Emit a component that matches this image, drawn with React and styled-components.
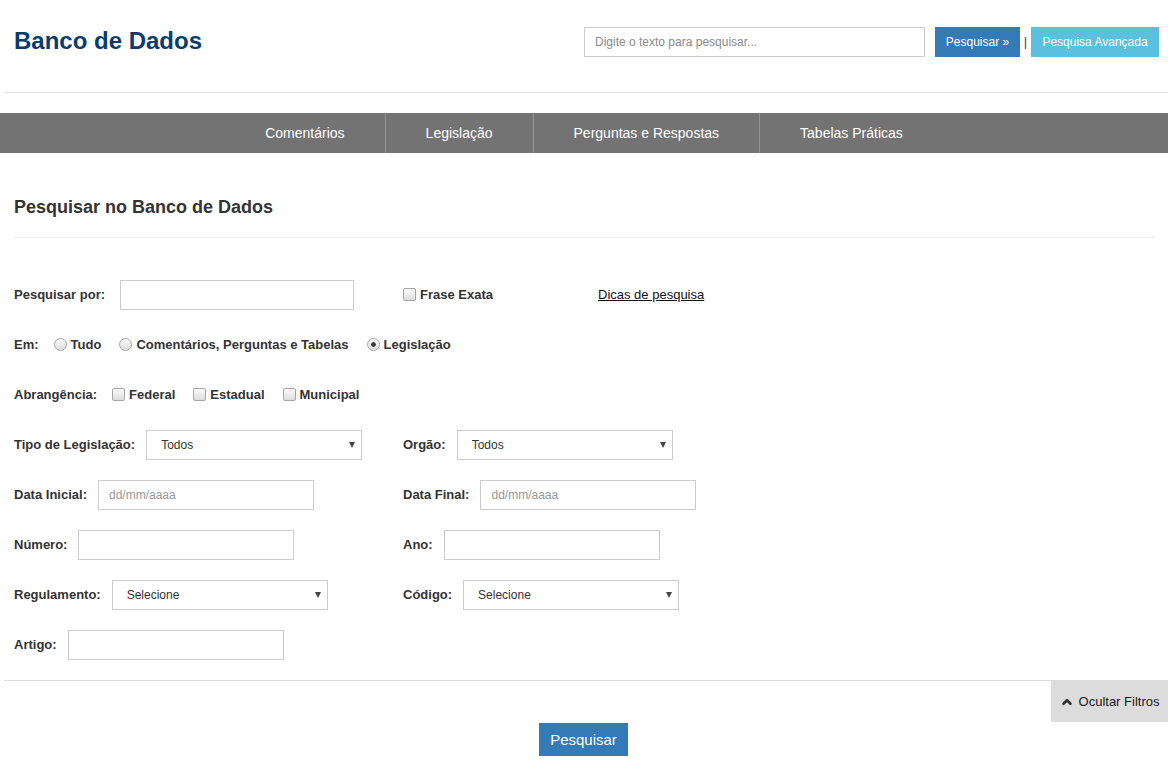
import React from "react";
import styled, { createGlobalStyle } from "styled-components";
import { ChevronUp } from "lucide-react";

const GlobalStyle = createGlobalStyle`
  body {
    margin: 0;
    background: #fff;
    font-family: "Liberation Sans", Arial, Helvetica, sans-serif;
    color: #333;
  }
  * {
    box-sizing: border-box;
  }
`;

const Header = styled.header`
  display: flex;
  align-items: center;
  justify-content: space-between;
  height: 82px;
  padding: 0 9px 0 14px;
`;

const Brand = styled.h1`
  margin: 0;
  font-size: 24px;
  font-weight: bold;
  color: #0a3c6e;
`;

const SearchBar = styled.form`
  display: flex;
  align-items: center;
  margin-top: 1px;
`;

const SearchInput = styled.input`
  width: 341px;
  height: 30px;
  border: 1px solid #ccc;
  padding: 0 10px;
  font-family: inherit;
  font-size: 12px;
  color: #333;

  &::placeholder {
    color: #8a8a8a;
  }
`;

const TopButton = styled.button`
  width: ${(p) => p.$width}px;
  height: 30px;
  border: none;
  padding: 0;
  background: ${(p) => p.$bg};
  color: #fff;
  font-family: inherit;
  font-size: 12px;
  cursor: pointer;
`;

const Pipe = styled.span`
  width: 11px;
  text-align: center;
  color: #4a3a5a;
  font-size: 13px;
`;

const Rule = styled.div`
  margin: ${(p) => p.$margin || "0"};
  border-top: 1px solid ${(p) => p.$color || "#e6e6e6"};
`;

const NavBar = styled.nav`
  display: flex;
  justify-content: center;
  height: 40px;
  background: #737373;
`;

const NavItem = styled.a`
  padding: 0 40px;
  line-height: 40px;
  color: #fff;
  font-size: 14px;
  text-decoration: none;

  & + & {
    border-left: 1px solid #939393;
  }
`;

const Section = styled.section`
  padding: 0 13px 0 14px;
`;

const Title = styled.h2`
  margin: 44px 0 20px;
  font-size: 18px;
  line-height: 20px;
  font-weight: bold;
  color: #333;
`;

const Form = styled.div`
  padding-top: 42px;
`;

const Row = styled.div`
  display: grid;
  grid-template-columns: 389px 1fr;
  align-items: center;
  height: 30px;
  margin-bottom: 20px;
`;

const Field = styled.div`
  display: flex;
  align-items: center;
  grid-column: ${(p) => (p.$full ? "1 / -1" : "auto")};
`;

const Label = styled.label`
  margin-right: ${(p) => p.$gap ?? 11}px;
  margin-top: -1px;
  font-size: 13px;
  font-weight: bold;
  color: #333;
  white-space: nowrap;
`;

const TextInput = styled.input`
  width: ${(p) => p.$width || 216}px;
  height: 30px;
  border: 1px solid #ccc;
  padding: 0 10px;
  font-family: inherit;
  font-size: 12px;
  color: #333;

  &::placeholder {
    color: #999;
  }
`;

const SelectBox = styled.div`
  position: relative;
  width: 216px;
  height: 30px;
`;

const Select = styled.select`
  appearance: none;
  width: 100%;
  height: 100%;
  border: 1px solid #ccc;
  border-radius: 0;
  background: #fff;
  padding: 0 24px 0 14px;
  font-family: inherit;
  font-size: 12px;
  color: #333;
`;

const Caret = styled.span`
  position: absolute;
  right: 7px;
  top: 50%;
  transform: translateY(-50%);
  width: 0;
  height: 0;
  border-left: 3.5px solid transparent;
  border-right: 3.5px solid transparent;
  border-top: 6px solid #444;
  pointer-events: none;
`;

const Option = styled.label`
  display: flex;
  align-items: center;
  margin-right: ${(p) => p.$gap ?? 18}px;
  margin-top: -1px;
  width: ${(p) => (p.$width ? `${p.$width}px` : "auto")};
  font-size: 13px;
  font-weight: bold;
  color: #333;
  white-space: nowrap;
`;

const Check = styled.input`
  appearance: none;
  flex: none;
  width: 13px;
  height: 13px;
  margin: 0 4px 1px 0;
  border: 1px solid #a6a6a6;
  border-radius: ${(p) => (p.type === "radio" ? "50%" : "2px")};
  background: linear-gradient(#fcfcfc, #dcdcdc);

  &:checked {
    background: radial-gradient(circle, #3c3c3c 0 2px, transparent 2.6px),
      linear-gradient(#fcfcfc, #dcdcdc);
  }
`;

const TipLink = styled.a`
  margin-top: -1px;
  font-size: 13px;
  color: #111;
  text-decoration: underline;
`;

const Footer = styled.div`
  display: flex;
  flex-direction: column;
  margin-left: 4px;
  border-top: 1px solid #dcdcdc;
`;

const ToggleButton = styled.button`
  align-self: flex-end;
  display: flex;
  align-items: center;
  justify-content: center;
  gap: 5px;
  width: 117px;
  height: 41px;
  padding: 0;
  border: none;
  background: #dcdcdc;
  color: #1a1a1a;
  font-family: inherit;
  font-size: 13px;
`;

const SubmitButton = styled.button`
  align-self: center;
  margin: 1px 0 0 -5px;
  width: 89px;
  height: 33px;
  padding: 0;
  border: none;
  background: #337ab7;
  color: #fff;
  font-family: inherit;
  font-size: 15px;
`;

const Dropdown = ({ value }) => (
  <SelectBox>
    <Select defaultValue={value}>
      <option>{value}</option>
    </Select>
    <Caret />
  </SelectBox>
);

const navItems = ["Comentários", "Legislação", "Perguntas e Respostas", "Tabelas Práticas"];

export default function App() {
  return (
    <>
      <GlobalStyle />
      <Header>
        <Brand>Banco de Dados</Brand>
        <SearchBar onSubmit={(e) => e.preventDefault()}>
          <SearchInput placeholder="Digite o texto para pesquisar..." />
          <TopButton $bg="#337ab7" $width={85} style={{ marginLeft: 10 }}>
            Pesquisar »
          </TopButton>
          <Pipe>|</Pipe>
          <TopButton $bg="#5bc0de" $width={128}>
            Pesquisa Avançada
          </TopButton>
        </SearchBar>
      </Header>
      <Rule $margin="10px 0 20px 4px" />

      <NavBar>
        {navItems.map((item) => (
          <NavItem key={item} href="#">
            {item}
          </NavItem>
        ))}
      </NavBar>

      <Section>
        <Title>Pesquisar no Banco de Dados</Title>
        <Rule $color="#eeeeee" />

        <Form>
          <Row>
            <Field>
              <Label $gap={15}>Pesquisar por:</Label>
              <TextInput $width={234} />
            </Field>
            <Field>
              <Option $width={195} $gap={0}>
                <Check type="checkbox" />
                Frase Exata
              </Option>
              <TipLink href="#">Dicas de pesquisa</TipLink>
            </Field>
          </Row>

          <Row>
            <Field $full>
              <Label $gap={15}>Em:</Label>
              <Option>
                <Check type="radio" name="em" />
                Tudo
              </Option>
              <Option>
                <Check type="radio" name="em" />
                Comentários, Perguntas e Tabelas
              </Option>
              <Option>
                <Check type="radio" name="em" defaultChecked />
                Legislação
              </Option>
            </Field>
          </Row>

          <Row>
            <Field $full>
              <Label $gap={15}>Abrangência:</Label>
              <Option>
                <Check type="checkbox" />
                Federal
              </Option>
              <Option>
                <Check type="checkbox" />
                Estadual
              </Option>
              <Option>
                <Check type="checkbox" />
                Municipal
              </Option>
            </Field>
          </Row>

          <Row>
            <Field>
              <Label>Tipo de Legislação:</Label>
              <Dropdown value="Todos" />
            </Field>
            <Field>
              <Label>Orgão:</Label>
              <Dropdown value="Todos" />
            </Field>
          </Row>

          <Row>
            <Field>
              <Label>Data Inicial:</Label>
              <TextInput placeholder="dd/mm/aaaa" />
            </Field>
            <Field>
              <Label>Data Final:</Label>
              <TextInput placeholder="dd/mm/aaaa" />
            </Field>
          </Row>

          <Row>
            <Field>
              <Label>Número:</Label>
              <TextInput />
            </Field>
            <Field>
              <Label>Ano:</Label>
              <TextInput />
            </Field>
          </Row>

          <Row>
            <Field>
              <Label>Regulamento:</Label>
              <Dropdown value="Selecione" />
            </Field>
            <Field>
              <Label>Código:</Label>
              <Dropdown value="Selecione" />
            </Field>
          </Row>

          <Row>
            <Field>
              <Label>Artigo:</Label>
              <TextInput />
            </Field>
          </Row>
        </Form>
      </Section>

      <Footer>
        <ToggleButton>
          <ChevronUp size={14} strokeWidth={4.5} color="#333" />
          Ocultar Filtros
        </ToggleButton>
        <SubmitButton>Pesquisar</SubmitButton>
      </Footer>
    </>
  );
}
